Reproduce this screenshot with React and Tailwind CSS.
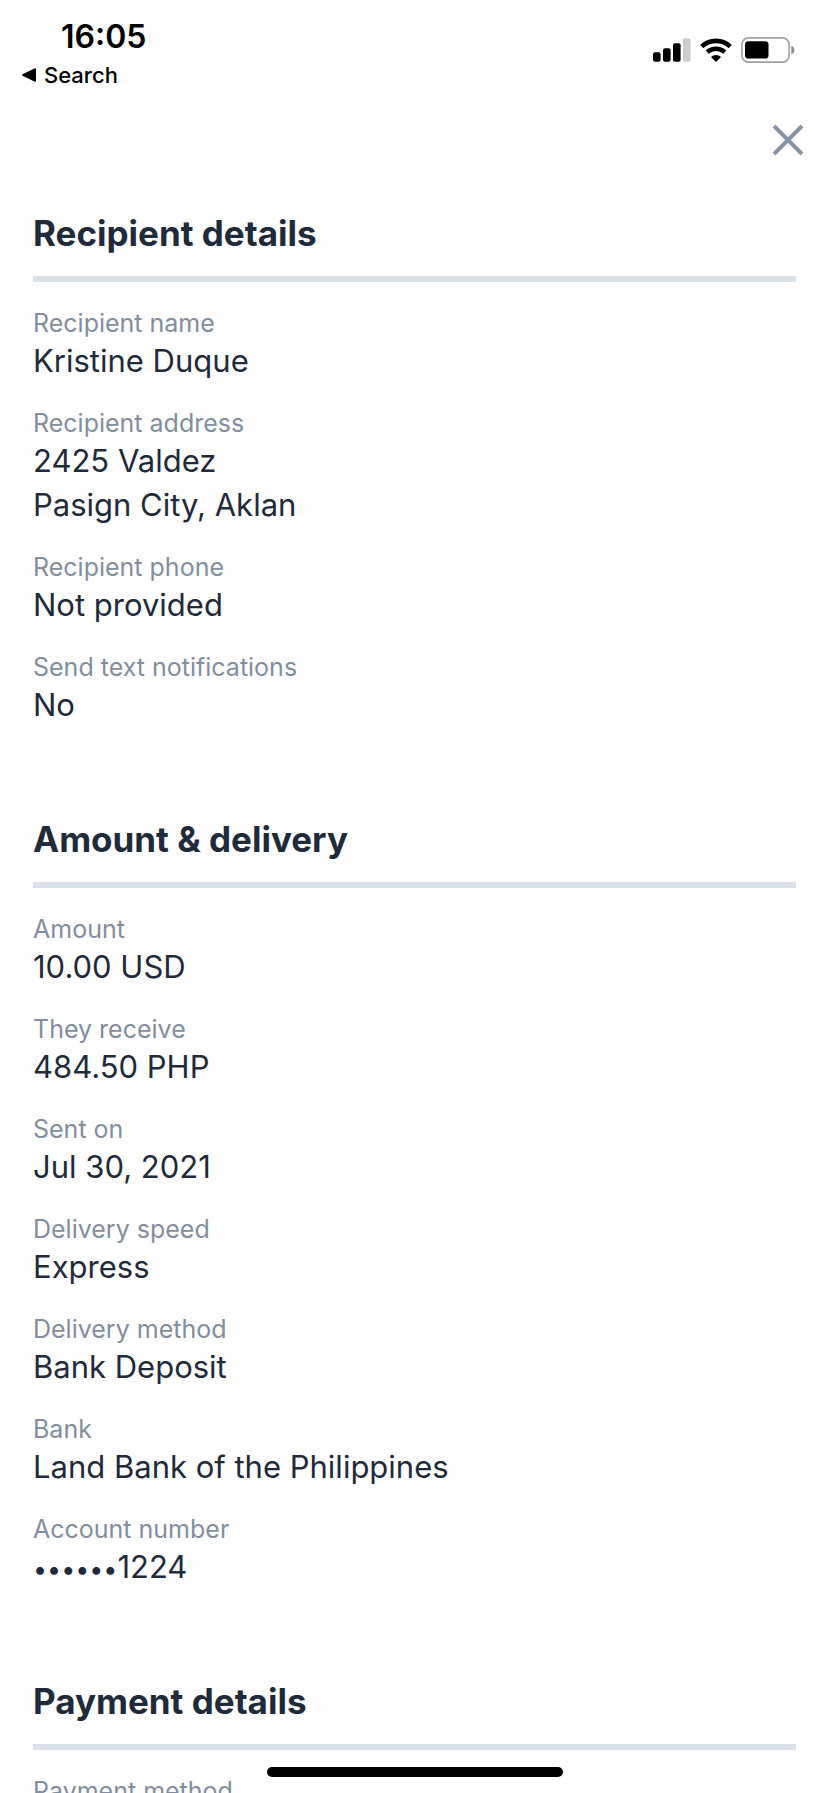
const sections = [
    {
        title: 'Recipient details',
        items: [
            { label: 'Recipient name', lines: ['Kristine Duque'] },
            { label: 'Recipient address', lines: ['2425 Valdez', 'Pasign City, Aklan'] },
            { label: 'Recipient phone', lines: ['Not provided'] },
            { label: 'Send text notifications', lines: ['No'] },
        ],
    },
    {
        title: 'Amount & delivery',
        items: [
            { label: 'Amount', lines: ['10.00 USD'] },
            { label: 'They receive', lines: ['484.50 PHP'] },
            { label: 'Sent on', lines: ['Jul 30, 2021'] },
            { label: 'Delivery speed', lines: ['Express'] },
            { label: 'Delivery method', lines: ['Bank Deposit'] },
            { label: 'Bank', lines: ['Land Bank of the Philippines'] },
            { label: 'Account number', mask: '••••••', lines: ['1224'] },
        ],
    },
    {
        title: 'Payment details',
        items: [{ label: 'Payment method', lines: [] }],
    },
];

const SignalIcon = () => (
    <svg width="38" height="24" viewBox="0 0 38 24" aria-hidden="true">
        <rect x="0" y="14.3" width="7.6" height="9.4" rx="2" />
        <rect x="10" y="10.3" width="7.6" height="13.4" rx="2" />
        <rect x="20" y="5.2" width="7.6" height="18.5" rx="2" />
        <rect x="30" y="0.2" width="7.6" height="23.5" rx="2" fill="#cccccc" />
    </svg>
);

const WifiIcon = () => (
    <svg width="32" height="24" viewBox="0 0 32 24" aria-hidden="true">
        <g fill="none" stroke="#000" strokeWidth="4.6">
            <path d="M1.8 8.6 A20.6 20.6 0 0 1 30.2 8.6" />
            <path d="M7.2 14.2 A12.8 12.8 0 0 1 24.8 14.2" />
        </g>
        <path d="M16 24 L11 19 A7.2 7.2 0 0 1 21 19 Z" />
    </svg>
);

const BatteryIcon = () => (
    <svg width="54" height="26" viewBox="0 0 54 26" aria-hidden="true">
        <rect x="0.9" y="0.9" width="47.2" height="24.2" rx="6.6" fill="none" stroke="#a0a0a0" strokeWidth="1.6" />
        <rect x="4" y="4.2" width="23.5" height="17.4" rx="3.4" />
        <path d="M50.3 8.8 Q53.4 10 53.4 13 Q53.4 16 50.3 17.2 Z" fill="#8c8c8c" />
    </svg>
);

const StatusBar = () => (
    <header className="flex items-start justify-between pl-[22px] pr-[34px] pt-[17px] text-black">
        <div>
            <div className="pl-[39px] text-[32px] leading-10 font-semibold">16:05</div>
            <a href="#search" className="mt-1 flex items-center gap-2 text-[22px] leading-7 font-medium">
                <svg width="14" height="14" viewBox="0 0 14 14" aria-hidden="true">
                    <path d="M0.6 6.2 L12.4 0.4 Q14 0 14 1.6 V12.4 Q14 14 12.4 13.6 L0.6 7.8 Q-0.4 7 0.6 6.2 Z" />
                </svg>
                Search
            </a>
        </div>
        <div className="flex items-center gap-[9px] pt-5">
            <SignalIcon />
            <WifiIcon />
            <BatteryIcon />
        </div>
    </header>
);

const DetailSection = ({ title, items }) => (
    <section>
        <h2 className="border-b-6 border-[#dae0e8] pb-[21px] text-[35px] leading-[44px] font-bold text-[#1f2a3a]">
            {title}
        </h2>
        <dl className="mt-[25px] space-y-6">
            {items.map((item) => (
                <div key={item.label}>
                    <dt className="text-[25px] leading-8 text-[#828e9d]">{item.label}</dt>
                    {item.lines.map((line) => (
                        <dd key={line} className="text-[31px] leading-[44px] text-[#1f2a3a]">
                            {item.mask && <span className="text-[25px] leading-none">{item.mask}</span>}
                            {line}
                        </dd>
                    ))}
                </div>
            ))}
        </dl>
    </section>
);

export default function App() {
    return (
        <div className="relative flex h-screen flex-col overflow-hidden bg-[#fefefe] font-['Inter',sans-serif]">
            <StatusBar />
            <div className="mt-[35px] flex justify-end pr-[25px]">
                <button type="button" aria-label="Close">
                    <svg width="32" height="32" viewBox="0 0 32 32" aria-hidden="true">
                        <path d="M2 2 L30 30 M30 2 L2 30" fill="none" stroke="#8895a7" strokeWidth="4" />
                    </svg>
                </button>
            </div>
            <main className="mt-[55px] space-y-[90px] px-[33px]">
                {sections.map((section) => (
                    <DetailSection key={section.title} {...section} />
                ))}
            </main>
            <div className="absolute bottom-4 left-1/2 h-[10px] w-[296px] -translate-x-1/2 rounded-full bg-black" />
        </div>
    );
}
